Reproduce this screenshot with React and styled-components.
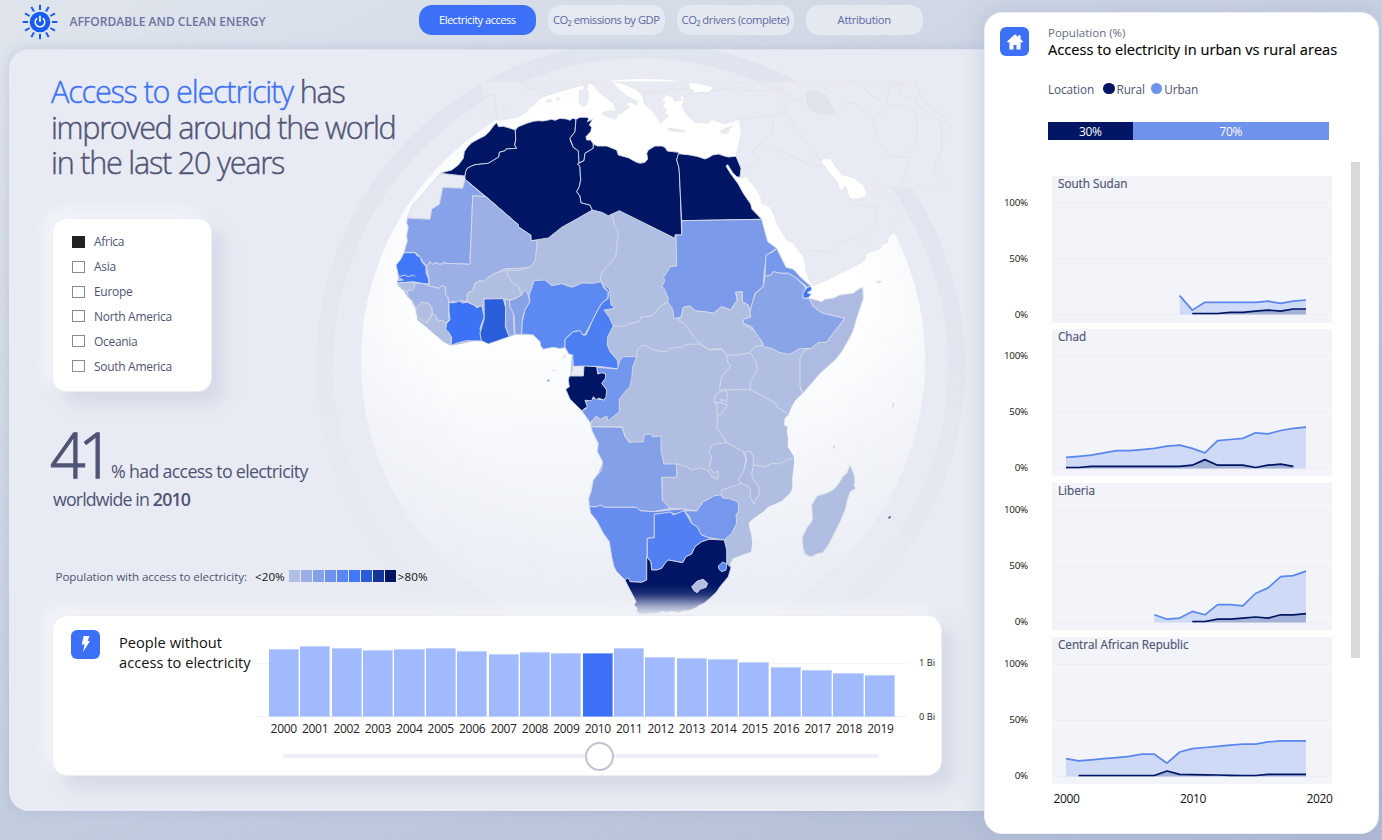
import React from "react";
import styled, { createGlobalStyle, css } from "styled-components";

const Global = createGlobalStyle`
  * { box-sizing: border-box; }
  html, body { margin: 0; padding: 0; }
  body {
    width: 1382px; height: 840px; overflow: hidden;
    font-family: "Open Sans", "Noto Sans", sans-serif;
    color: #4f5475;
    background: linear-gradient(155deg, #e0e5ed 0%, #d3dae6 25%, #c3cde0 55%, #b0bbd4 100%);
  }
`;

const ink = "#4f5475";
const navy = "#001664";
const sky = "#6f92ec";
const blue = "#3b70f7";
const paper = "#e8ebf3";

/* ---------- page frame ---------- */

const Page = styled.div`
  width: 1382px;
  height: 840px;
  display: flex;
`;

const Main = styled.main`
  width: 984px;
  flex: none;
  display: flex;
  flex-direction: column;
`;

const TopBar = styled.header`
  height: 48.5px;
  padding: 4px 0 0 22px;
  display: flex;
  align-items: flex-start;
`;

const Brand = styled.div`
  width: 396.5px;
  display: flex;
  align-items: center;
  gap: 11.5px;
  height: 35px;
  font-size: 12px;
  font-weight: 600;
  letter-spacing: 0.02px;
  color: #6b72a0;
  white-space: nowrap;
`;

const Tabs = styled.nav`
  display: flex;
  gap: 11.5px;
  padding-top: 1px;
`;

const Tab = styled.button`
  width: 117.5px;
  height: 29.5px;
  padding: 0;
  border: 0;
  border-radius: 13px;
  font: 400 11.2px/29px "Open Sans", sans-serif;
  letter-spacing: ${(p) => p.$track}px;
  white-space: nowrap;
  background: ${(p) => (p.$active ? blue : "rgba(236, 239, 246, 0.68)")};
  color: ${(p) => (p.$active ? "#fff" : "#6069a0")};
`;

const Stage = styled.section`
  position: relative;
  margin-left: 8.5px;
  height: 762px;
  padding: 25.5px 0 0 42.5px;
  border-radius: 20px 0 0 20px;
  background: ${paper};
  box-shadow: 0 0 12px rgba(150, 164, 196, 0.4), inset 0 1px 0 #dfe3ee;
  display: flex;
  flex-direction: column;
  align-items: flex-start;
`;

const MapLayer = styled.svg`
  position: absolute;
  left: -8.5px;
  top: -48.5px;
  pointer-events: none;
`;

/* ---------- left column ---------- */

const Headline = styled.h1`
  position: relative;
  margin: 0;
  font-size: 30.6px;
  font-weight: 300;
  line-height: 35.5px;
  color: ${ink};
  -webkit-text-stroke: 0.4px;
  white-space: nowrap;
`;

const HeadLine = styled.span`
  display: block;
  letter-spacing: ${(p) => p.$track}px;
`;

const Accent = styled.span`
  color: ${blue};
`;

const card = css`
  background: #fff;
  border: 1px solid #eceef6;
  box-shadow: 12px 12px 16px rgba(196, 201, 220, 0.5),
    -8px -8px 18px rgba(247, 249, 251, 0.75);
`;

const RegionCard = styled.div`
  ${card}
  position: relative;
  width: 160px;
  height: 174px;
  margin: 37px 0 0 1px;
  padding: 11px 0 0 19px;
  border-radius: 14px;
`;

const RegionRow = styled.label`
  display: flex;
  align-items: center;
  gap: 9.5px;
  height: 24.85px;
  font-size: 12px;
  letter-spacing: -0.3px;
`;

const Tick = styled.span`
  width: 12.5px;
  height: 12px;
  border: 1px solid ${(p) => (p.$on ? "#222" : "#8b8b8b")};
  background: ${(p) => (p.$on ? "#222" : "#fff")};
`;

const Stat = styled.div`
  position: relative;
  margin-top: 22.5px;
  height: 104px;
  font-size: 17.8px;
  font-weight: 400;
  color: ${ink};
  white-space: nowrap;
`;

const StatTop = styled.div`
  height: 73px;
  display: flex;
  align-items: baseline;
`;

const BigNumber = styled.span`
  font-size: 62px;
  font-weight: 300;
  line-height: 80px;
  letter-spacing: -7px;
  width: 61px;
  margin-left: -1px;
  -webkit-text-stroke: 1.3px;
`;

const StatText = styled.span`
  letter-spacing: -0.68px;
`;

const StatBottom = styled.div`
  padding-left: 2px;
  line-height: 24px;
  letter-spacing: -0.85px;
  b { font-weight: 600; }
`;

const Scale = styled.div`
  position: relative;
  margin: 48px 0 0 4.5px;
  height: 20px;
  display: flex;
  align-items: center;
  font-size: 11.6px;
  letter-spacing: -0.09px;
  white-space: nowrap;
`;

const ScaleEnd = styled.span`
  color: #111;
  letter-spacing: 0.1px;
  margin: ${(p) => p.$m};
`;

const Swatch = styled.i`
  width: 11px;
  height: 12px;
  margin-right: 1px;
  background: ${(p) => p.$c};
`;

/* ---------- bar chart card ---------- */

const PeopleCard = styled.div`
  ${card}
  position: relative;
  width: 890px;
  height: 161px;
  margin: 29px 0 0 1px;
  border-radius: 15px;
  display: flex;
  padding: 13.5px 0 0 18px;
`;

const IconTile = styled.span`
  flex: none;
  width: 29px;
  height: 29px;
  border-radius: 6px;
  background: ${blue};
  display: flex;
  align-items: center;
  justify-content: center;
`;

const CardTitle = styled.h2`
  margin: 2.5px 0 0 19px;
  width: 138px;
  flex: none;
  font-size: 14.6px;
  font-weight: 400;
  line-height: 20px;
  color: #111;
  white-space: nowrap;
  letter-spacing: 0.04px;
`;

const ChartColumn = styled.div`
  width: 650px;
`;

const PlotRow = styled.div`
  display: flex;
  height: 87px;
`;

const Bars = styled.div`
  width: 650px;
  padding: 0 12px 0 12px;
  display: flex;
  align-items: flex-end;
  gap: 1.3px;
  background: linear-gradient(#f3f4f7, #f3f4f7) 0 33px / 100% 1px no-repeat,
    linear-gradient(#f0f1f5, #f0f1f5) 0 86px / 100% 1px no-repeat;
`;

const Bar = styled.div`
  flex: 1;
  background: ${(p) => (p.$on ? blue : "#a0bafd")};
  border: 1px solid ${(p) => (p.$on ? "#86a8fb" : "#c3d3fe")};
  border-left-width: 0;
`;

const Years = styled.div`
  display: flex;
  padding: 4px 11px 0 11px;
  font-size: 12px;
  line-height: 16px;
  letter-spacing: -0.3px;
  color: #222;
  span { flex: 1; text-align: center; }
`;

const Track = styled.div`
  margin: 17.5px 28px 0 26px;
  height: 4px;
  border-radius: 2px;
  background: #eeeef8;
  display: flex;
  align-items: center;
`;

const Knob = styled.span`
  width: 29px;
  height: 29px;
  margin-left: 301.5px;
  border-radius: 50%;
  background: #fff;
  border: 2px solid #c3c1d2;
`;

const BarAxis = styled.div`
  padding: 24px 0 0 12px;
  font-size: 9.3px;
  line-height: 18px;
  color: #222;
  white-space: nowrap;
  display: flex;
  flex-direction: column;
  gap: 36px;
`;

/* ---------- right panel ---------- */

const Panel = styled.aside`
  position: relative;
  width: 395px;
  height: 822.5px;
  margin-top: 11.5px;
  margin-left: -0.5px;
  padding: 14.5px 0 0 15.5px;
  border-radius: 18px;
  border: 1px solid #eef0f7;
  background: #fff;
  box-shadow: 0 0 24px rgba(150, 163, 198, 0.42);
  display: flex;
  flex-direction: column;
`;

const PanelHead = styled.div`
  display: flex;
  height: 53.5px;
`;

const PanelTitles = styled.div`
  margin: -2px 0 0 19px;
  white-space: nowrap;
`;

const Kicker = styled.div`
  font-size: 11.5px;
  line-height: 16px;
  color: #666c82;
`;

const PanelTitle = styled.h2`
  margin: 0;
  font-size: 14.6px;
  font-weight: 400;
  line-height: 17px;
  letter-spacing: 0.01px;
  color: #000;
  -webkit-text-stroke: 0.15px;
`;

const Key = styled.div`
  margin-left: 48px;
  display: flex;
  align-items: center;
  height: 16px;
  font-size: 11.8px;
  letter-spacing: -0.12px;
  color: ${ink};
  white-space: nowrap;
`;

const Dot = styled.i`
  width: 11.5px;
  height: 11.5px;
  border-radius: 50%;
  margin: ${(p) => p.$m};
  background: ${(p) => p.$c};
`;

const Split = styled.div`
  margin: 25px 0 0 47.5px;
  width: 281px;
  height: 18px;
  display: flex;
  font-size: 12px;
  line-height: 19px;
  letter-spacing: -0.4px;
  text-align: center;
  color: #fff;
`;

const Share = styled.div`
  flex: ${(p) => p.$share};
  background: ${(p) => p.$c};
`;

const Scroller = styled.div`
  display: flex;
  margin-top: 22px;
`;

const Multiples = styled.div`
  padding-top: 14px;
  display: flex;
  flex-direction: column;
  gap: 6.8px;
`;

const Multiple = styled.div`
  display: flex;
  height: 147px;
`;

const Levels = styled.div`
  width: 28px;
  margin-right: 23.5px;
  padding-top: 18px;
  text-align: right;
  font-size: 9.8px;
  line-height: 18px;
  letter-spacing: -0.2px;
  color: #111;
  display: flex;
  flex-direction: column;
  gap: 38px;
`;

const Plot = styled.div`
  width: 280px;
  height: 147px;
  background: #f3f4f9;
`;

const PlotName = styled.div`
  height: 15.8px;
  padding: 0 0 0 6.5px;
  font-size: 11.7px;
  line-height: 15px;
  color: ${ink};
  -webkit-text-stroke: 0.2px;
`;

const Decades = styled.div`
  display: flex;
  justify-content: space-between;
  margin: -0.5px 0 0 52.5px;
  width: 280px;
  padding-left: 1px;
  font-size: 12px;
  line-height: 17px;
  letter-spacing: -0.35px;
  color: #111;
`;

const Thumb = styled.div`
  width: 9px;
  height: 496px;
  margin-left: 18px;
  background: #d9d9d9;
`;

/* ---------- map ---------- */

/* Each letter opens a survey tile; its points are thirds of a pixel from the tile's corner. */
const TILE = { A: [380, 90], B: [640, 60], C: [380, 240], D: [600, 230], E: [560, 400] };

const trace = (text, closed = true) => {
  let tile = TILE.A;
  const points = [];
  text.trim().split(/\s+/).forEach((t) => {
    if (TILE[t]) tile = TILE[t];
    else {
      const [x, y] = t.split(",").map(Number);
      points.push((tile[0] + x / 3).toFixed(1) + " " + (tile[1] + y / 3).toFixed(1));
    }
  });
  return "M" + points.join("L") + (closed ? "Z" : "");
};

const BASE = "#b0bfe1";

const CONTINENT =
  "C 50,128 56,140 70,150 82,170 92,180 108,210 112,240 135,258 160,280 190,305 213,317 300,300 390,285 470,285 490,320 555,325 575,345 570,440 605,512 628,530 632,560 650,600 E 115,130 128,185 100,260 260,400 440,480 500,505 513,505 510,490 520,475 573,455 577,430 573,400 567,380 567,367 585,352 610,335 625,320 665,303 690,280 697,265 697,235 702,190 702,170 683,140 684,115 680,90 683,82 672,75 674,55 D 565,555 575,530 585,512 608,490 650,440 620,210 500,30 B 340,470 A 640,200 300,300 C 100,40 60,100";

const SOUTH_AFRICA =
  "E 195,540 205,533 210,545 245,547 260,540 260,470 272,485 275,510 290,510 305,505 315,490 325,480 368,488 378,470 395,462 405,440 425,425 447,418 493,420 500,450 500,490 513,503 505,530 480,560 470,575 450,595 432,610 420,615 405,625 385,632 370,633 355,638 335,634 320,637 305,635 290,640 265,641 240,643 230,635 231,625 222,615 228,605 218,585 210,570";

const COUNTRIES = [
  ["#e8ebf3", "A 180,252 255,258 248,295 188,292 178,343 155,357 150,388 82,384 95,350 102,338 120,322 150,285"],
  [navy, "A 180,250 195,245 215,240 235,225 250,205 253,185 262,172 275,158 295,147 315,137 330,122 340,108 350,98 356,110 370,109 385,113 400,118 406,120 407,150 404,165 410,175 378,177 376,182 358,187 357,200 345,208 325,220 285,224 275,228 262,235 257,245 255,258"],
  [navy, "A 406,120 415,110 440,100 460,94 475,92 490,93 515,88 525,91 540,85 560,87 570,91 578,85 588,88 585,125 570,145 572,155 580,172 595,182 598,217 593,222 600,230 601,255 602,270 598,290 590,305 600,318 603,338 630,345 637,360 590,387 545,412 530,424 505,444 453,452 452,435 435,425 415,410 415,404 318,320 255,268 255,258 257,245 262,235 275,228 285,224 325,220 345,208 357,200 358,187 376,182 378,177 410,175 404,165 407,150"],
  [navy, "A 588,88 600,82 622,82 626,88 622,95 638,88 628,105 635,112 632,125 618,140 620,150 632,150 640,162 640,175 615,190 612,212 597,218 595,182 580,172 570,145 585,125"],
  [navy, "A 640,162 652,168 680,168 710,180 715,195 745,203 768,216 780,220 795,217 803,207 800,190 805,180 825,168 845,168 855,172 862,183 895,187 B 117,278 110,300 116,320 118,335 121,400 125,525 105,525 105,535 A 718,362 685,377 665,367 637,360 630,345 603,338 600,318 590,305 598,290 602,270 601,255 600,230 593,222 612,212 615,190 640,175"],
  [navy, "B 115,281 150,285 175,290 195,297 205,293 218,285 236,282 250,287 265,291 288,289 303,325 300,352 290,350 278,338 263,314 258,318 270,338 295,372 310,400 332,432 336,448 365,478 125,482 121,400 118,335 116,320 110,300"],
  ["#87a2e8", "A 255,268 315,320 278,317 275,400 270,510 273,518 268,523 195,520 193,515 190,521 180,523 165,518 158,524 150,515 142,530 125,510 120,500 105,487 72,488 78,465 82,455 80,435 85,410 80,400 82,384 150,388 155,357 178,343 188,292 248,295"],
  ["#9cb0e6", "A 278,317 318,320 415,404 415,410 452,435 453,452 472,452 C 468,40 466,60 452,80 430,84 375,86 350,98 320,115 312,125 300,122 285,130 280,150 262,160 262,185 245,182 235,188 215,183 207,190 203,170 197,165 195,140 185,138 178,145 148,138 147,115 140,80 150,65 158,74 165,68 180,73 190,71 193,65 195,70 268,73 273,68 270,60 275,-50"],
  ["#4178f8", "C 72,38 105,38 112,48 120,50 125,65 138,80 138,100 145,115 147,132 125,130 100,125 52,129 52,122 70,120 54,112 55,105 48,75 62,58"],
  ["#9fb1e5", "C 82,152 98,148 103,130 125,130 148,138 178,145 185,138 195,140 197,165 203,170 207,190 205,225 208,240 195,250 188,240 175,243 165,225 157,222 155,200 145,190 125,187 108,205 95,180 85,172"],
  [BASE, "C 108,205 125,187 145,190 155,200 157,222 140,248 118,235 108,222"],
  [BASE, "C 52,129 103,127 103,145 98,150 78,154 65,148"],
  [BASE, "C 262,185 262,160 280,150 285,130 300,122 312,125 320,115 350,98 380,90 383,105 395,125 415,140 425,165 395,180 380,178 312,176 312,195 300,202 285,197"],
  ["#3c73f6", "C 207,188 222,188 240,183 247,189 262,187 285,197 290,203 305,197 313,230 300,265 305,303 260,302 235,308 213,316 214,290 205,275 197,270 200,250 210,240 207,215"],
  ["#8fa7e8", "C 376,178 388,180 390,200 400,215 403,285 388,290 377,260"],
  ["#2b5edb", "C 312,177 370,176 377,205 376,260 388,290 325,312 304,302 300,280 313,235"],
  ["#87a3e8", "C 388,182 408,175 425,165 432,150 443,160 450,185 435,210 428,235 425,283 405,284 402,225 390,200"],
  ["#5c89f2", "C 425,282 427,245 435,210 450,185 447,165 455,145 462,122 495,120 515,137 545,131 575,142 592,136 605,129 640,130 663,125 672,145 685,155 683,175 665,190 648,220 636,245 625,265 615,283 608,285 600,272 580,275 560,292 555,298 556,322 540,326 520,322 490,328 482,318 480,305 460,285"],
  ["#4c7ff2", "C 663,125 688,147 690,165 693,195 706,205 672,210 688,232 700,258 683,290 682,315 690,335 712,360 716,387 655,379 580,380 578,345 566,342 555,322 555,298 580,275 600,272 608,285 618,285 636,245 648,220 665,190 685,175 685,155"],
  [paper, "C 577,379 612,378 610,408 570,406 579,390"],
  ["#7297ec", "C 650,382 712,387 720,360 730,350 770,350 758,380 755,415 750,440 735,455 718,478 718,515 685,542 680,528 662,538 648,528 632,550 605,512 620,505 615,485 640,475 672,480 680,450 665,430 677,402 655,402"],
  [navy, "C 612,378 650,380 653,402 666,398 677,402 676,415 665,430 680,450 678,470 672,480 655,474 650,480 640,470 635,482 615,481 618,490 622,500 605,512 570,478 557,448 568,440 565,420 568,408 610,408"],
  ["#7b9aea", "B 125,482 365,478 372,505 383,545 410,565 380,585 372,640 370,680 345,700 D 458,215 450,245 452,262 445,225 427,215 427,185 407,187 412,210 392,240 365,230 340,250 315,245 287,243 270,228 250,232 243,262 222,265 218,238 203,215 205,205 192,175 185,172 195,150 190,143 205,120 210,110 230,108 228,15 B 105,525 125,525"],
  [BASE, "D 243,262 250,232 270,228 287,243 315,245 340,250 365,230 392,240 412,210 407,187 427,185 427,215 445,225 452,262 430,270 430,280 460,300 475,315 490,345 465,350 450,368 415,375 380,375 365,358 330,360 305,345 280,320 255,283 235,270"],
  ["#7498ec", "D 530,55 540,75 550,95 558,112 580,118 605,145 632,168 622,172 590,145 565,130 542,130 520,125 512,136 495,138 498,75 520,65"],
  ["#8aa4e8", "D 495,138 512,136 520,125 542,130 565,130 590,145 618,173 610,190 610,205 628,205 640,230 665,248 735,265 700,310 680,337 655,338 635,355 597,356 570,373 540,368 515,355 490,350 488,338 475,320 455,290 430,280 430,268 452,262 450,245 458,215 467,190 490,170"],
  ["#adbae2", "D 628,205 640,208 665,215 675,208 700,205 720,195 760,190 780,175 788,173 790,205 780,235 770,265 758,305 745,330 725,365 705,390 660,430 630,465 608,490 600,470 600,385 615,360 635,355 655,338 680,337 700,310 735,265 665,248 640,230"],
  ["#3d74f7", "D 632,168 636,180 622,188 634,193 625,203 610,205 609,190 620,174"],
  ["#acbae2", "E 500,128 458,133 447,155 455,170 447,200 460,218 475,213 474,238 455,230 445,212 420,203 395,210 380,200 360,195 350,190 350,232 305,232 307,300 330,325 372,327 410,333 430,305 460,290 485,285 484,270 545,250 535,240 552,215 557,180 550,155"],
  ["#acbae2", "E 555,155 572,155 580,170 580,195 575,225 580,240 598,262 597,285 585,300 583,312 570,292 572,270 568,262 545,250 535,240 550,215 560,180"],
  ["#83a0e9", "E 95,80 188,82 195,108 208,127 250,125 253,103 273,103 278,110 303,108 303,150 312,192 350,192 350,232 305,232 307,300 330,325 280,335 240,332 230,322 135,322 120,315 112,320 88,320 86,295 93,275 100,240 112,225 125,210 128,185 112,155 115,130 105,110 95,90"],
  ["#658cee", "E 88,320 112,320 120,315 135,322 230,322 240,332 280,335 370,327 375,333 345,343 335,338 283,343 283,413 262,415 260,540 245,547 205,545 195,540 170,515 162,500 155,470 148,425 130,400 110,362 92,340"],
  ["#5280f2", "E 283,343 332,336 340,345 372,332 395,370 412,380 425,405 448,412 447,418 425,425 405,440 395,462 378,470 368,488 325,480 315,490 305,505 290,510 275,510 272,485 262,470 262,415 283,413"],
  ["#7598ec", "E 372,332 410,333 430,305 450,295 460,288 480,285 490,295 505,295 535,306 535,335 528,345 530,370 515,400 493,420 448,413 425,405 412,380 395,370 388,348"],
  ["url(#cape)", SOUTH_AFRICA],
  [BASE, "E 395,560 405,550 412,543 430,538 443,550 438,562 420,568 412,578 402,572"],
  ["#5b88f2", "E 475,498 488,486 500,492 498,510 485,515 477,508"],
  [BASE, "E 870,195 876,210 882,225 884,240 882,258 887,265 870,275 862,300 855,330 840,365 825,395 805,435 788,458 775,460 752,470 735,462 730,445 727,412 740,385 758,360 755,315 772,288 800,280 815,272 825,265 838,248 848,230 862,218"],
];

const BORDERS = [
  "A 697,373 703,405 715,427 712,455 707,500 C 680,80 660,107 663,125",
  "C 380,90 410,92 440,84",
  "C 140,250 157,222",
  "C 213,316 214,290",
  "C 700,258 D 75,288 85,282 118,275 122,262 150,258 160,255 180,230 205,213",
  "D 110,380 112,360 125,347 140,347 155,358 185,365 200,365 210,355 240,352 262,343 300,342 325,358",
  "D 380,375 383,395 392,408 375,428 365,440 358,480 450,478 452,455 472,420 468,395 450,368",
  "D 450,478 528,520 530,530 565,552",
  "D 358,483 345,498 342,517 350,520 352,555 352,595 365,615 380,640",
  "D 365,517 362,507 380,515 382,485 372,480 358,488",
  "D 342,517 365,519 383,525 365,552 352,555",
  "D 330,358 355,356 365,358 380,375",
  "D 600,470 608,490",
  "E 580,195 615,200 635,190 660,192 680,180 702,172",
  "C 632,560 725,560 735,590 750,608",
  "C 632,560 636,540",
  "C 55,110 75,105 85,110 100,105 106,110",
];

const LANDS = [
  "A 300,-24 630,-24 609,-21 590,-12 560,-2 520,10 490,18 474,30 462,44 450,52 440,66 415,80 395,84 375,88 358,92 345,85 318,76 302,70 312,35 306,10",
  "A 598,2 620,-4 626,10 622,42 608,50 598,40",
  "A 612,-30 624,-24 622,-8 612,-4",
  "A 630,-24 698,-24 712,-5 740,18 772,34 770,46 750,36 738,42 748,52 726,68 716,75 708,60 700,40 676,22 655,5 645,-10",
  "A 666,68 682,64 710,62 712,80 706,88 685,80 668,74",
  "A 362,45 374,40 378,46 366,50",
  "A 498,32 512,28 516,34 504,38",
  "A 530,26 540,26 538,30 530,30",
  "B -75,66 145,66 148,84 165,94 150,104 132,112 126,140 140,165 165,186 205,190 216,178 255,192 298,178 304,215 296,255 288,288 304,325 302,352 320,350 330,365 345,380 362,410 365,430 390,440 405,470 410,490 440,540 460,550 490,590 495,605 497,630 510,665 520,677 560,660 600,640 640,622 675,600 680,580 722,565 728,552 742,548 745,532 760,520 776,450 765,425 735,415 708,400 700,360 692,372 700,382 760,382 915,380 925,360 880,330 910,260 935,200 850,110 825,66 210,66 222,84 175,98 145,110 118,108 125,120 104,124 98,110 80,106 65,118 76,128 66,136 80,150 72,158 86,168 75,175 62,190 50,172 35,150 22,140 5,105 -10,90 -40,75",
  "B 85,204 110,208 135,212 130,217 100,214 84,210",
  "B 240,215 252,208 278,197 268,208 265,218 250,221",
];

const FOREIGN_BORDERS = [
  "B 150,104 175,98 205,95 240,88 300,82 320,92 380,92 405,85 440,80",
  "B 298,178 340,172 400,165 440,158 425,120 405,85",
  "B 400,165 398,215 365,245 338,275 358,298 330,322 304,325",
  "B 365,245 400,265 520,318 545,318",
  "B 440,158 475,215 510,260 530,290 545,300",
  "B 370,66 395,85 425,95 450,125 480,120 500,95",
  "B 410,85 450,100 458,115",
  "B 585,160 620,130 650,132 700,178 705,210 712,240 750,290 815,292 800,330 785,380",
  "B 700,178 740,140 780,135 830,160 830,230 825,260 790,292",
  "B 630,66 665,80 700,110 740,130 745,105 745,75 760,70 800,75 808,66",
  "B 780,100 800,115 820,105 840,140 860,160 905,185 905,270 885,310 880,330 920,380",
  "B 825,66 840,110 880,150 900,160 935,205",
  "B 497,572 570,575 600,545 660,530 685,572",
  "B 660,530 708,500 710,440 650,435 625,412",
  "B 735,75 755,85 770,72 780,90 790,76",
  "B 530,66 560,90 580,72 595,66",
  "A 310,20 345,15 350,85",
  "A 420,-24 440,-5 480,0 510,12",
  "A 830,-20 800,10 790,30 800,50",
  "A 760,-24 785,0 800,10 850,8 880,-10",
  "B 10,70 40,95 80,90 145,84",
];

const SEAS = [
  "B 545,305 550,297 572,298 585,320 605,345 640,355 668,375 680,398 672,410 640,418 628,412 622,385 612,375 608,392 598,382 595,368 575,345",
  "B 145,68 175,72 220,83 205,96 175,94 160,90",
];

const WorldMap = () => (
  <MapLayer width="984" height="616" viewBox="0 0 984 616">
    <defs>
      <linearGradient id="globe" x1="0" y1="0" x2="0" y2="1">
        <stop offset="0" stopColor="#fff" />
        <stop offset="0.42" stopColor="#fff" />
        <stop offset="0.95" stopColor="#eaeef5" />
      </linearGradient>
      <radialGradient id="rim" cx="0.5" cy="0.4" r="0.62">
        <stop offset="0.6" stopColor="#e8ebf3" stopOpacity="0" />
        <stop offset="1" stopColor="#e8ebf3" stopOpacity="0.6" />
      </radialGradient>
      <linearGradient id="ring" x1="0.6" y1="0" x2="0.4" y2="1">
        <stop offset="0" stopColor="#c5cfdf" stopOpacity="0.25" />
        <stop offset="0.45" stopColor="#c5cfdf" stopOpacity="0.16" />
        <stop offset="0.85" stopColor="#c5cfdf" stopOpacity="0.03" />
      </linearGradient>
      <linearGradient id="cape" gradientUnits="userSpaceOnUse" x1="0" y1="584" x2="0" y2="615">
        <stop offset="0" stopColor={navy} />
        <stop offset="0.35" stopColor="#172b72" />
        <stop offset="1" stopColor="#b4bcd6" />
      </linearGradient>
    </defs>
    <circle cx="640.5" cy="366" r="316" fill="none" stroke="url(#ring)" strokeWidth="17" />
    <circle cx="643" cy="361" r="282" fill="url(#globe)" />
    <circle cx="643" cy="361" r="282" fill="url(#rim)" />
    <g fill={paper} stroke="#e6e6ea" strokeWidth="0.8">
      {LANDS.map((d) => <path key={d} d={trace(d)} />)}
    </g>
    <g fill="none" stroke="#e3e4e8" strokeWidth="1">
      {FOREIGN_BORDERS.map((d) => <path key={d} d={trace(d, false)} />)}
    </g>
    <path fill="#dfe3ec" d={trace("B 498,95 530,90 560,108 570,125 587,158 560,165 540,162 510,150 498,132")} />
    <g fill="#fff">
      {SEAS.map((d) => <path key={d} d={trace(d)} />)}
    </g>
    <path d={trace(CONTINENT)} fill={BASE} />
    <g stroke="#d7dbe8" strokeWidth="0.9" strokeLinejoin="round">
      {COUNTRIES.map(([fill, d]) => <path key={d} d={trace(d)} fill={fill} />)}
    </g>
    <g fill="none" stroke="#d7dbe8" strokeWidth="0.9" strokeLinejoin="round">
      {BORDERS.map((d) => <path key={d} d={trace(d, false)} />)}
    </g>
    <path d={trace("C 548,348 556,344 558,350 550,357")} fill={paper} stroke="#d7dbe8" strokeWidth="0.4" />
    <circle cx="548.3" cy="380.5" r="1.1" fill="#6f92ec" />
    <circle cx="554" cy="370.5" r="0.7" fill="#b0bfe1" />
    <path d={trace("B 705,664 718,661 728,665 715,671")} fill="#e2e5ee" />
    <path d={trace("E 985,351 993,348 991,354 986,356")} fill="#3a4380" />
    <path d={trace("E 820,138 824,138 824,147 820,143")} fill="#c3c9d8" />
    <path d={trace("E 998,8 1002,10 1000,24 996,22")} fill="#cfd4e0" />
  </MapLayer>
);

/* ---------- icons ---------- */

const SunLogo = () => (
  <svg width="36" height="36" viewBox="-18 -18 36 36">
    {Array.from({ length: 12 }, (_, i) => (
      <path key={i} d="M0-17.3V-12" stroke="#175cf5" strokeWidth="2" transform={`rotate(${i * 30})`} />
    ))}
    <circle r="10.3" fill="#175cf5" />
    <path d="M-2.7-3.9A4.8 4.8 0 1 0 2.7-3.9" fill="none" stroke="#fff" strokeWidth="1.5" />
    <path d="M0-6.2V-.2" stroke="#fff" strokeWidth="1.7" />
  </svg>
);

const Bolt = () => (
  <svg width="10" height="16" viewBox="0 0 10 16">
    <path d="M2.6 0H8.6L6.6 5H9L2 16L3.6 8.6H.8Z" fill="#fff" />
  </svg>
);

const House = () => (
  <svg width="16" height="16" viewBox="0 0 16 16">
    <path d="M8 .2L11.2 3.1V1.2H13.6V5.3L16 7.6L15 8.8L13.6 8V15.6H9.5V11H6.5V15.6H2.4V8L1 8.8L0 7.6Z" fill="#fff" />
  </svg>
);

/* ---------- data ---------- */

const TABS = [
  ["Electricity access", -0.56],
  ["CO₂ emissions by GDP", -0.45],
  ["CO₂ drivers (complete)", -0.42],
  ["Attribution", -0.3],
];
const REGIONS = ["Africa", "Asia", "Europe", "North America", "Oceania", "South America"];
const RAMP = ["#b0bfe1", "#9cb0e6", "#83a0e9", "#6f92ec", "#5986f2", "#4178f8", "#2b5ad6", "#123598", "#001664"];
const BAR_HEIGHTS = [67.5, 70.5, 68.5, 67, 67.5, 68.5, 66, 63, 64.5, 64, 63.5, 69, 59.5, 59, 57.5, 54.5, 50, 47, 44, 42];

const SERIES = [
  {
    name: "South Sudan",
    urban: [2009, [17, 4, 11, 11, 11, 11, 11, 12, 10, 12, 13]],
    rural: [2010, [1, 1, 1, 2, 2, 3, 4, 3, 5, 5]],
  },
  {
    name: "Chad",
    urban: [2000, [10, 11, 12, 14, 16, 16, 17, 18, 20, 21, 18, 14, 25, 26, 27, 32, 31, 34, 36, 37]],
    rural: [2000, [1, 1, 2, 2, 2, 2, 2, 2, 2, 2, 3, 8, 3, 3, 3, 1, 3, 4, 2]],
  },
  {
    name: "Liberia",
    urban: [2007, [7, 3, 4, 10, 7, 16, 16, 15, 26, 31, 41, 42, 46]],
    rural: [2010, [1, 1, 3, 3, 4, 5, 4, 7, 7, 8]],
  },
  {
    name: "Central African Republic",
    urban: [2000, [16, 14, 15, 16, 17, 18, 20, 20, 12, 22, 25, 26, 27, 28, 29, 29, 31, 32, 32, 32]],
    rural: [2001, [1, 1, 1, 1, 1, 1, 1, 5, 2, 1.8, 1.6, 1.4, 1.2, 1, 1, 2, 2, 2, 2]],
  },
];

const AreaLine = ({ data: [start, values], stroke, fill }) => {
  const x = (i) => 14 + (start - 2000 + i) * 12.63;
  const line = values.map((v, i) => `${x(i).toFixed(1)} ${(123.6 - v * 1.12).toFixed(1)}`).join("L");
  return (
    <>
      <path d={`M${line}L${x(values.length - 1)} 123.6L${x(0)} 123.6Z`} fill={fill} />
      <path d={`M${line}`} fill="none" stroke={stroke} strokeWidth="1.7" strokeLinejoin="round" />
    </>
  );
};

const PlotArea = styled.svg`
  display: block;
`;

const SmallMultiple = ({ item }) => (
  <Multiple>
    <Levels><span>100%</span><span>50%</span><span>0%</span></Levels>
    <Plot>
      <PlotName>{item.name}</PlotName>
      <PlotArea width="280" height="131" viewBox="0 0 280 131">
        {[11.5, 67.5, 123.5].map((y) => <path key={y} d={`M3 ${y}H278`} stroke="#ebedf2" />)}
        <AreaLine data={item.urban} stroke="#5b86ee" fill="#cfdaf6" />
        <AreaLine data={item.rural} stroke={navy} fill="rgba(0,22,100,.2)" />
      </PlotArea>
    </Plot>
  </Multiple>
);

export default function App() {
  return (
    <Page>
      <Global />
      <Main>
        <TopBar>
          <Brand><SunLogo />AFFORDABLE AND CLEAN ENERGY</Brand>
          <Tabs>
            {TABS.map(([label, track], i) => (
              <Tab key={label} $active={i === 0} $track={track}>{label}</Tab>
            ))}
          </Tabs>
        </TopBar>
        <Stage>
          <WorldMap />
          <Headline>
            <HeadLine $track={-1.18}><Accent>Access to electricity</Accent> has</HeadLine>
            <HeadLine $track={-1.32}>improved around the world</HeadLine>
            <HeadLine $track={-1.23}>in the last 20 years</HeadLine>
          </Headline>
          <RegionCard>
            {REGIONS.map((name, i) => (
              <RegionRow key={name}><Tick $on={i === 0} />{name}</RegionRow>
            ))}
          </RegionCard>
          <Stat>
            <StatTop>
              <BigNumber>41</BigNumber>
              <StatText>% had access to electricity</StatText>
            </StatTop>
            <StatBottom>worldwide in <b>2010</b></StatBottom>
          </Stat>
          <Scale>
            Population with access to electricity:
            <ScaleEnd $m="0 4px 0 8px">&lt;20%</ScaleEnd>
            {RAMP.map((c) => <Swatch key={c} $c={c} />)}
            <ScaleEnd $m="0 0 0 1px">&gt;80%</ScaleEnd>
          </Scale>
          <PeopleCard>
            <IconTile><Bolt /></IconTile>
            <CardTitle>People without<br />access to electricity</CardTitle>
            <ChartColumn>
              <PlotRow>
                <Bars>
                  {BAR_HEIGHTS.map((h, i) => <Bar key={i} $on={i === 10} style={{ height: h }} />)}
                </Bars>
              </PlotRow>
              <Years>{BAR_HEIGHTS.map((_, i) => <span key={i}>{2000 + i}</span>)}</Years>
              <Track><Knob /></Track>
            </ChartColumn>
            <BarAxis><span>1 Bi</span><span>0 Bi</span></BarAxis>
          </PeopleCard>
        </Stage>
      </Main>
      <Panel>
        <PanelHead>
          <IconTile><House /></IconTile>
          <PanelTitles>
            <Kicker>Population (%)</Kicker>
            <PanelTitle>Access to electricity in urban vs rural areas</PanelTitle>
          </PanelTitles>
        </PanelHead>
        <Key>
          Location
          <Dot $c={navy} $m="0 2px 0 9px" />Rural
          <Dot $c={sky} $m="0 2px 0 6px" />Urban
        </Key>
        <Split>
          <Share $share={85.5} $c={navy}>30%</Share>
          <Share $share={195.5} $c={sky}>70%</Share>
        </Split>
        <Scroller>
          <Multiples>
            {SERIES.map((item) => <SmallMultiple key={item.name} item={item} />)}
            <Decades><span>2000</span><span>2010</span><span>2020</span></Decades>
          </Multiples>
          <Thumb />
        </Scroller>
      </Panel>
    </Page>
  );
}
